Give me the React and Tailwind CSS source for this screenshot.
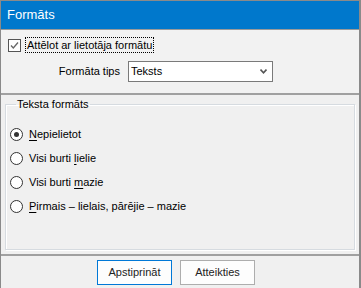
import React from "react";

const font = { fontFamily: '"Liberation Sans", Arial, sans-serif' };

function Radio({ checked, label, u, pre = "", post = "" }) {
  return (
    <div className="flex items-center h-[24px]">
      <span className="w-[13px] h-[13px] rounded-full border border-[#333] bg-white flex items-center justify-center shrink-0">
        {checked && <span className="w-[5px] h-[5px] rounded-full bg-[#333]" />}
      </span>
      <span className="ml-[6px] text-[11px] text-black leading-[13px]">
        {pre}
        <span className="underline underline-offset-2">{u}</span>
        {post}
      </span>
    </div>
  );
}

export default function App() {
  return (
    <div
      className="w-[361px] h-[288px] flex flex-col bg-[#f0f0f0] border-l border-r-2 border-t border-[#8a8a8a] overflow-hidden"
      style={font}
    >
      <div className="h-[29px] bg-[#0078cc] flex items-center pl-[6px] text-white text-[13px] border-b border-[#9a9a9a] shrink-0">
        Formāts
      </div>
      <div className="h-[65px] bg-[#f2f2f2] border-b-2 border-[#a0a0a0] shrink-0 flex flex-col pl-[7px] pt-[7px]">
        <div className="flex items-center h-[16px]">
          <span className="w-[13px] h-[13px] border border-[#555] bg-white flex items-center justify-center shrink-0">
            <svg width="11" height="11" viewBox="0 0 11 11">
              <path d="M2 5.5 L4.3 8 L9 2.5" fill="none" stroke="#666" strokeWidth="1.3" />
            </svg>
          </span>
          <span className="ml-[4px] h-[16px] px-[1px] flex items-center border border-dotted border-black text-[11px] text-black">
            Attēlot ar lietotāja formātu
          </span>
        </div>
        <div className="flex items-center mt-[8px]">
          <span className="w-[112px] text-right text-[11px] text-black">Formāta tips</span>
          <div className="ml-[8px] w-[145px] h-[21px] bg-white border border-[#7a7a7a] flex items-center justify-between pl-[2px] pr-[5px] text-[11px] text-black">
            <span>Teksts</span>
            <svg width="7" height="5" viewBox="0 0 7 5">
              <path d="M0.5 0.5 L3.5 3.8 L6.5 0.5" fill="none" stroke="#555" strokeWidth="1.6" />
            </svg>
          </div>
        </div>
      </div>
      <div className="flex-1 flex flex-col px-[4px] pt-[3px] pb-[4px] border-b-2 border-[#a0a0a0]">
        <fieldset className="flex-1 border border-[#d6dbe0] shadow-[1px_1px_0_#fff,inset_1px_1px_0_#fff] pl-[4px] pt-[11px]">
          <legend className="ml-[6px] px-[1px] text-[11px] text-black leading-[13px]">Teksta formāts</legend>
          <Radio checked u="N" post="epielietot" />
          <Radio pre="Visi burti " u="l" post="ielie" />
          <Radio pre="Visi burti " u="m" post="azie" />
          <Radio u="P" post="irmais – lielais, pārējie – mazie" />
        </fieldset>
      </div>
      <div className="h-[32px] shrink-0 flex items-start pt-[4px] pl-[96px] gap-[8px]">
        <button className="w-[75px] h-[25px] bg-[#fdfdfd] border border-[#0078d7] text-[11px] text-[#222]">
          Apstiprināt
        </button>
        <button className="w-[75px] h-[25px] bg-[#fdfdfd] border border-[#adadad] text-[11px] text-[#222]">
          Atteikties
        </button>
      </div>
    </div>
  );
}
